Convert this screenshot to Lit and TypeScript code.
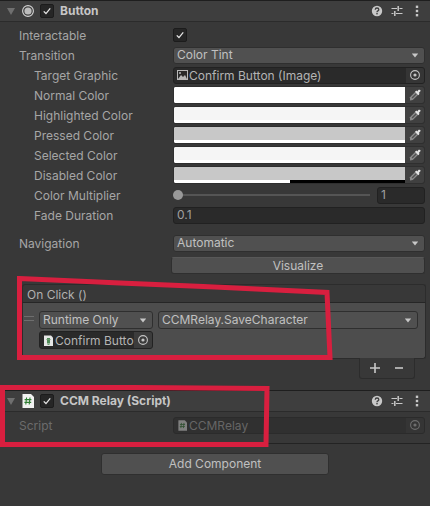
import { LitElement, html, css, svg } from "lit";
import { customElement } from "lit/decorators.js";

const check = html`<svg class="ck" viewBox="0 0 14 14"><path d="M3.2 7.4 L5.8 10 L10.8 4" fill="none" stroke="#e6e6e6" stroke-width="1.5"/></svg>`;
const target = html`<svg class="tg" viewBox="0 0 12 12"><circle cx="6" cy="6" r="4.4" fill="none" stroke="currentColor" stroke-width="1.1"/><circle cx="6" cy="6" r="1.6" fill="currentColor"/></svg>`;
const caret = html`<svg class="caret" viewBox="0 0 8 5"><path d="M0.8 0.6 H7.2 L4 4.4 Z" fill="#c8c8c8"/></svg>`;
const dropper = html`<svg class="dp" viewBox="0 0 12 12"><path d="M6.6 2.6 L9.4 5.4 L3.8 11 L1 11.4 L1 8.2 Z" fill="#8c8c8c"/><path d="M2.6 8.4 L6.8 4.2 L7.8 5.2 L3.6 9.4 Z" fill="#505050"/><path d="M6 2.8 L7.4 1.6 L8.2 2.4 L9.6 0.8 Q10.8 0.4 11.4 1 Q11.8 2 11.2 2.6 L9.8 4 L10.6 4.8 L9.4 6.2 Z" fill="#e2e2e2"/></svg>`;
const tools = html`<div class="tools">
  <svg width="12" height="12" viewBox="0 0 12 12"><circle cx="6" cy="6" r="5.2" fill="#c8c8c8"/><path d="M4.2 4.7 Q4.3 3 6 3 Q7.8 3 7.8 4.5 Q7.8 5.4 6.9 5.8 Q6 6.2 6 7.2" fill="none" stroke="#3e3e3e" stroke-width="1.3"/><rect x="5.3" y="8" width="1.4" height="1.4" fill="#3e3e3e"/></svg>
  <svg width="12" height="12" viewBox="0 0 12 12"><path d="M0.5 3.5 H6 M8.5 3.5 H11.5 M0.5 8.5 H2.5 M5 8.5 H11.5" stroke="#c8c8c8" stroke-width="1.1" fill="none"/><path d="M7.2 1 V6 M3.8 6 V11" stroke="#c8c8c8" stroke-width="1.5" fill="none"/></svg>
  <svg width="4" height="12" viewBox="0 0 4 12"><rect x="0.8" y="0.6" width="2.4" height="2.4" fill="#c8c8c8"/><rect x="0.8" y="4.8" width="2.4" height="2.4" fill="#c8c8c8"/><rect x="0.8" y="9" width="2.4" height="2.4" fill="#c8c8c8"/></svg>
</div>`;
const scriptIcon = (s: string) => html`<svg class=${s} viewBox="0 0 12 14"><path d="M0.5 0 H9 L12 3 V14 H0.5 Z" fill="#f1f1f1"/><path d="M4.6 3.5 L3.8 10.5 M8 3.5 L7.2 10.5 M2.6 5.6 H9.4 M2.4 8.4 H9.2" stroke="#2f7d32" stroke-width="1.1" fill="none"/></svg>`;
const figIcon = html`<svg class="fi" viewBox="0 0 9 11"><path d="M0 0.5 H7 L9 2.5 V11 H0 Z" fill="#e6e6e6"/><path d="M3 3 H6 V8.5 H3 Z" fill="#4f8a57"/><path d="M2.5 4.5 H6.5 M3.5 9.5 H5.5" stroke="#6a9c70" fill="none"/></svg>`;

@customElement("app-root")
export class AppRoot extends LitElement {
  static styles = css`
    :host { display: block; position: relative; width: 430px; height: 506px; overflow: hidden; background: #383838;
      font: 12px/16px Inter, "Liberation Sans", sans-serif; color: #a6a6a6; }
    .head { height: 20px; background: #3e3e3e; border-top: 1px solid #1e1e1e; border-bottom: 1px solid #2b2b2b;
      display: flex; align-items: center; padding-left: 7px; box-sizing: content-box; }
    .tri { width: 8px; height: 7px; margin-right: 7px; flex: none; }
    .radio { width: 12px; height: 12px; margin-right: 6px; flex: none; }
    .sicon { width: 12px; height: 14px; margin-right: 6px; flex: none; }
    .cb { width: 14px; height: 14px; box-sizing: border-box; border-radius: 2px; background: #262626; border: 1px solid #1c1c1c; flex: none; display: block; }
    .ck { width: 12px; height: 12px; display: block; }
    .head .cb { margin-right: 6px; }
    .title { font-weight: 700; color: #c6c6c6; flex: 1; white-space: nowrap; }
    .tools { display: flex; align-items: center; gap: 9px; padding-right: 11px; }
    .tools svg { display: block; }
    .tools svg:nth-child(2) { margin-left: -1px; margin-right: 3px; }
    .body { padding: 4px 5px 0 0; }
    .row { display: grid; grid-template-columns: 173px 1fr; height: 18px; margin-bottom: 2px; align-items: center; white-space: nowrap; }
    .lb { padding-left: 19px; padding-top: 1px; }
    .ind { padding-left: 34px; padding-top: 1px; }
    .dim { color: #6c6c6c; }
    .dd { height: 17px; box-sizing: border-box; background: #505050; border: 1px solid #2f2f2f; border-radius: 3px;
      display: flex; align-items: center; padding: 0 5px 0 3px; color: #c0c0c0; white-space: nowrap; overflow: hidden; }
    .dd span { flex: 1; }
    .caret { width: 8px; height: 5px; display: block; flex: none; }
    .obj { height: 17px; box-sizing: border-box; background: #2a2a2a; border: 1px solid #222; border-radius: 3px;
      display: flex; align-items: center; color: #b4b4b4; overflow: hidden; white-space: nowrap; }
    .obj .nm { flex: 1; padding-top: 1px; }
    .obj .end { width: 18px; height: 100%; background: #353535; display: flex; align-items: center; justify-content: center; flex: none; color: #c4c4c4; }
    .tg { width: 12px; height: 12px; display: block; }
    .imgi { width: 11px; height: 10px; margin: 0 1px 0 3px; flex: none; }
    .col { height: 18px; box-sizing: border-box; display: flex; background: #2a2a2a; border-radius: 3px; overflow: hidden; border: 1px solid #2f2f2f; }
    .sw { flex: 1; display: flex; flex-direction: column; background: #fff; }
    .sw .c { flex: 1; }
    .sw .a { height: 3px; flex: none; background: #fff; display: flex; }
    .sw .a b { display: block; background: #000; width: 115px; margin-left: auto; }
    .dpb { width: 19px; background: #404040; display: flex; align-items: center; justify-content: center; flex: none; }
    .dp { width: 12px; height: 12px; display: block; }
    .slider { display: flex; align-items: center; }
    .track { flex: 1; height: 2px; background: #555; position: relative; margin-right: 7px; }
    .thumb { position: absolute; left: 0; top: -4px; width: 10px; height: 10px; border-radius: 50%; background: #999; }
    .num { height: 17px; box-sizing: border-box; background: #2a2a2a; border: 1px solid #212121; border-radius: 3px; padding: 0 4px 0 3px; color: #a0a0a0; display: flex; align-items: center; }
    .num.w { width: 48px; flex: none; }
    .nav { margin-top: 10px; }
    .vis { margin: 5px 0 0 171px; height: 17px; box-sizing: border-box; background: #505050; border: 1px solid #2f2f2f; border-top-color: #585858; border-radius: 3px;
      text-align: center; color: #c0c0c0; line-height: 15px; }
    .ev { margin: 10px 4px 0 22px; }
    .ev-h { height: 19px; box-sizing: border-box; background: #383838; border: 1px solid #2c2c2c; border-bottom: 1px solid #262626; border-radius: 3px 3px 0 0; padding: 2px 0 0 4px; color: #b0b0b0; }
    .ev-b { height: 56px; box-sizing: border-box; background: #4d4d4d; border: 1px solid #2c2c2c; border-top: 0; border-radius: 0 0 3px 3px; padding: 8px 7px 0 16px; position: relative; display: flex; flex-direction: column; gap: 2px; }
    .ev-r { display: flex; gap: 5px; height: 18px; }
    .ev-r .dd { height: 18px; }
    .ev-r .a1 { width: 114px; flex: none; }
    .ev-r .a2 { flex: 1; }
    .ev-r .obj { width: 114px; height: 18px; flex: none; }
    .ev-r .obj .end { background: #3c3c3c; width: 19px; }
    .fi { width: 9px; height: 11px; margin: 0 2px 0 4px; flex: none; }
    .hd { position: absolute; left: 1px; top: 13px; width: 10px; height: 3px; border-top: 1px solid #6e6e6e; border-bottom: 1px solid #6e6e6e; }
    .foot { margin: -1px 15px 0 auto; width: 56px; height: 21px; box-sizing: border-box; background: #383838; border: 1px solid #2c2c2c; border-top: 0; border-radius: 0 0 3px 3px;
      display: flex; align-items: center; justify-content: space-around; padding: 0 3px; position: relative; }
    .foot svg { display: block; }
    .comp2 { margin-top: 11px; }
    .comp2 .body { padding-top: 4px; padding-bottom: 9px; border-bottom: 1px solid #232323; height: 18px; box-sizing: content-box; }
    .ghost { background: #303030; border-color: #2b2b2b; color: #666; }
    .ghost .end { background: #353535; color: #6e6e6e; }
    .si { width: 9px; height: 11px; margin: 0 2px 0 4px; flex: none; opacity: .42; }
    .add { display: block; margin: 9px auto 0; width: 228px; height: 22px; box-sizing: border-box; background: #505050; border: 1px solid #2f2f2f; border-radius: 3px; color: #c0c0c0; text-align: center; line-height: 20px; }
    .ann { position: absolute; left: 0; top: 0; width: 430px; height: 506px; pointer-events: none; }
  `;

  colorRow(name: string, c: string, alpha = false) {
    return html`<div class="row"><div class="ind">${name}</div>
      <div class="col"><div class="sw"><div class="c" style="background:${c}"></div><div class="a">${alpha ? html`<b></b>` : ""}</div></div><div class="dpb">${dropper}</div></div></div>`;
  }

  render() {
    return html`
      <div class="head">
        <svg class="tri" viewBox="0 0 8 7"><path d="M0 0 H8 L4 7 Z" fill="#6f6f6f"/></svg>
        <svg class="radio" viewBox="0 0 12 12"><circle cx="6" cy="6" r="5.4" fill="none" stroke="#d4d4d4" stroke-width="1.1"/><circle cx="6" cy="6" r="3.6" fill="#bdbdbd"/></svg>
        <span class="cb">${check}</span>
        <div class="title">Button</div>
        ${tools}
      </div>
      <div class="body">
        <div class="row"><div class="lb">Interactable</div><span class="cb">${check}</span></div>
        <div class="row"><div class="lb">Transition</div><div class="dd"><span>Color Tint</span>${caret}</div></div>
        <div class="row"><div class="ind">Target Graphic</div>
          <div class="obj">
            <svg class="imgi" viewBox="0 0 11 10"><rect x="0.5" y="0.5" width="10" height="9" fill="none" stroke="#b8b8b8"/><path d="M1 9 L4 5 L6 7 L8 5 L10 9 Z" fill="#b8b8b8"/><circle cx="3" cy="3" r="1" fill="#b8b8b8"/></svg>
            <div class="nm">Confirm Button (Image)</div><div class="end">${target}</div>
          </div></div>
        ${this.colorRow("Normal Color", "#ffffff")}
        ${this.colorRow("Highlighted Color", "#f5f5f5")}
        ${this.colorRow("Pressed Color", "#c8c8c8")}
        ${this.colorRow("Selected Color", "#f5f5f5")}
        ${this.colorRow("Disabled Color", "#c8c8c8", true)}
        <div class="row"><div class="ind">Color Multiplier</div>
          <div class="slider"><div class="track"><div class="thumb"></div></div><div class="num w">1</div></div></div>
        <div class="row"><div class="ind">Fade Duration</div><div class="num">0.1</div></div>
        <div class="row nav"><div class="lb">Navigation</div><div class="dd"><span>Automatic</span>${caret}</div></div>
        <div class="vis">Visualize</div>
      </div>
      <div class="ev">
        <div class="ev-h">On Click ()</div>
        <div class="ev-b">
          <div class="hd"></div>
          <div class="ev-r">
            <div class="dd a1"><span>Runtime Only</span>${caret}</div>
            <div class="dd a2"><span>CCMRelay.SaveCharacter</span>${caret}</div>
          </div>
          <div class="ev-r"><div class="obj">${figIcon}<div class="nm">Confirm Butto</div><div class="end">${target}</div></div></div>
        </div>
      </div>
      <div class="foot">
        <svg width="10" height="10" viewBox="0 0 10 10"><path d="M5 0 V10 M0 5 H10" stroke="#c8c8c8" stroke-width="1.6"/></svg>
        <svg width="10" height="10" viewBox="0 0 10 10"><path d="M1 5 H9" stroke="#c8c8c8" stroke-width="1.6"/></svg>
      </div>
      <div class="comp2">
        <div class="head">
          <svg class="tri" viewBox="0 0 8 7"><path d="M0 0 H8 L4 7 Z" fill="#6f6f6f"/></svg>
          ${scriptIcon("sicon")}
          <span class="cb">${check}</span>
          <div class="title">CCM Relay (Script)</div>
          ${tools}
        </div>
        <div class="body">
          <div class="row dim"><div class="lb">Script</div>
            <div class="obj ghost">${scriptIcon("si")}<div class="nm">CCMRelay</div><div class="end">${target}</div></div></div>
        </div>
      </div>
      <div class="add">Add Component</div>
      <svg class="ann" viewBox="0 0 430 506">
        ${svg`<path d="M19.5 278.5 L120 283 L215 287 L327 292.5 L330 357.5 H19.5 Z" fill="none" stroke="#d81f3f" stroke-width="5"/>
        <path d="M2.5 387.5 H135 L267 388.5 L266 444.5 H2.5 Z" fill="none" stroke="#d81f3f" stroke-width="5"/>`}
      </svg>
    `;
  }
}
